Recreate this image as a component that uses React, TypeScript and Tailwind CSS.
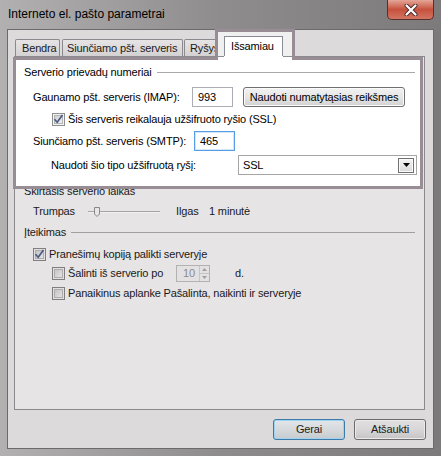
import type { ReactNode } from "react"

function Check({ checked, dim }: { checked?: boolean; dim?: boolean }) {
    return (
        <span
            className={
                dim
                    ? "flex h-[13px] w-[13px] shrink-0 items-center justify-center border border-[#807e80] bg-[#e2e0e1]"
                    : "flex h-[13px] w-[13px] shrink-0 items-center justify-center border border-[#8e8f8f] bg-[#f4f4f4]"
            }
        >
            <span
                className={
                    dim
                        ? "flex h-[9px] w-[9px] items-center justify-center border border-[#aeacad] bg-gradient-to-br from-[#c6c4c5] to-[#e4e2e3]"
                        : "flex h-[9px] w-[9px] items-center justify-center border border-[#b4b4b4] bg-gradient-to-br from-[#d2d2d2] to-[#f0f0f0]"
                }
            >
                {checked && (
                    <svg width="9" height="9" viewBox="0 0 9 9" className="overflow-visible">
                        <path d="M0.5 4.2 L3.2 7.2 L8.5 0" stroke="#4b5b85" strokeWidth="1.7" fill="none" />
                    </svg>
                )}
            </span>
        </span>
    )
}

function WinButton({ children, focused, dim }: { children: ReactNode; focused?: boolean; dim?: boolean }) {
    return (
        <div
            className={
                focused
                    ? "flex h-[21px] w-[72px] items-center justify-center rounded-[3px] border border-[#3b7aa9] bg-gradient-to-b from-[#e2e6e9] via-[#d6dadd] to-[#c6cbcf] shadow-[inset_0_0_0_1px_#9fd3f0]"
                    : dim
                      ? "flex h-[21px] w-[72px] items-center justify-center rounded-[3px] border border-[#6c6a6b] bg-gradient-to-b from-[#e2e0e1] via-[#d8d6d7] to-[#c6c4c5] shadow-[inset_0_0_0_1px_#ecebeb]"
                      : "flex h-[20px] w-[162px] items-center justify-center rounded-[3px] border border-[#707070] bg-gradient-to-b from-[#f2f2f2] via-[#e6e6e6] to-[#d2d2d2] shadow-[inset_0_0_0_1px_#fbfbfb]"
            }
        >
            {children}
        </div>
    )
}

function Tab({ children, w, pl }: { children: ReactNode; w: string; pl: string }) {
    return (
        <div
            className={`flex h-[17px] items-center rounded-t-[2px] border border-b-0 border-[#8b898d] bg-gradient-to-b from-[#e6e4e5] to-[#d3d1d2] ${w} ${pl}`}
        >
            {children}
        </div>
    )
}

export default function App() {
    return (
        <div className="relative h-[456px] w-[441px] overflow-hidden bg-gradient-to-r from-[#b2b0b1] via-[#8e8c8d] to-[#7c7a7b] font-['Liberation_Sans',sans-serif] text-[11px] leading-[13px] tracking-[-0.15px] text-[#1a1a1a]">
            {/* title bar */}
            <div className="flex h-[29px] items-center pl-[8px]">
                <span className="text-[12px] tracking-normal text-black">Interneto el. pašto parametrai</span>
            </div>

            {/* close button */}
            <div className="absolute left-[387px] top-0 flex h-[20px] w-[47px] items-center justify-center rounded-b-[5px] border border-t-0 border-[#5a2e2a] bg-gradient-to-b from-[#e3a597] via-[#c6513d] to-[#d27563]">
                <svg width="14" height="12" viewBox="0 0 14 12">
                    <path d="M2.5 1.5 L11.5 10.5 M11.5 1.5 L2.5 10.5" stroke="#4a2a2a" strokeWidth="4" strokeLinecap="round" />
                    <path d="M2.5 1.5 L11.5 10.5 M11.5 1.5 L2.5 10.5" stroke="#ffffff" strokeWidth="2.2" strokeLinecap="round" />
                </svg>
            </div>

            {/* client area */}
            <div className="mx-[7px] flex h-[420px] flex-col border border-[#6c6a6b] bg-[#dcdadb]">
                {/* tabs */}
                <div className="flex h-[26px] items-end pl-[7px]">
                    <Tab w="w-[45px]" pl="pl-[6px]">Bendra</Tab>
                    <div className="w-[2px]" />
                    <Tab w="w-[121px]" pl="pl-[4px]">Siunčiamo pšt. serveris</Tab>
                    <div className="w-[1px]" />
                    <Tab w="w-[40px]" pl="pl-[5px]">Ryšys</Tab>
                </div>

                {/* tab panel */}
                <div className="ml-[6px] flex h-[354px] w-[411px] flex-col border border-[#8b898d] bg-[#e6e4e5]">
                    {/* highlighted group */}
                    <div className="relative z-10 -ml-[2px] flex h-[132px] w-[410px] flex-col border-[3px] border-[#998d95] bg-white text-black">
                        <div className="mt-[6px] flex h-[13px] items-center pl-[8px]">
                            <span>Serverio prievadų numeriai</span>
                            <div className="ml-[5px] mr-[5px] h-px flex-1 bg-[#a9a9a9]" />
                        </div>

                        <div className="mt-[8px] flex h-[20px] items-center pl-[17px]">
                            <span className="w-[159px]">Gaunamo pšt. serveris (IMAP):</span>
                            <div className="flex h-[20px] w-[41px] items-center border border-[#abadb3] pl-[5px]">993</div>
                            <div className="ml-[10px]">
                                <WinButton>Naudoti numatytąsias reikšmes</WinButton>
                            </div>
                        </div>

                        <div className="mt-[6px] flex h-[13px] items-center pl-[36px]">
                            <Check checked />
                            <span className="ml-[3px]">Šis serveris reikalauja užšifruoto ryšio (SSL)</span>
                        </div>

                        <div className="mt-[5px] flex h-[20px] items-center pl-[17px]">
                            <span className="w-[161px]">Siunčiamo pšt. serveris (SMTP):</span>
                            <div className="flex h-[20px] w-[41px] items-center border border-[#569de5] pl-[5px] shadow-[inset_0_0_0_1px_#d4e6f7]">465</div>
                        </div>

                        <div className="mt-[4px] flex h-[20px] items-center pl-[35px]">
                            <span className="w-[187px]">Naudoti šio tipo užšifruotą ryšį:</span>
                            <div className="flex h-[20px] w-[179px] items-center justify-between border border-[#a5a5a5] pl-[4px] pr-[2px]">
                                <span>SSL</span>
                                <div className="flex h-[15px] w-[16px] items-center justify-center border border-[#707070] bg-gradient-to-b from-[#f3f3f3] to-[#d9d9d9] shadow-[inset_0_0_0_1px_#fbfbfb]">
                                    <svg width="7" height="4" viewBox="0 0 7 4">
                                        <path d="M0 0 H7 L3.5 4 Z" fill="#000" />
                                    </svg>
                                </div>
                            </div>
                        </div>
                    </div>

                    {/* rest of the panel, dimmed */}
                    <div className="-mt-[4px] flex h-[13px] items-center pl-[9px]">Skirtasis serverio laikas</div>

                    <div className="mt-[7px] flex h-[13px] items-center pl-[18px]">
                        <span className="w-[55px]">Trumpas</span>
                        <svg width="72" height="12" viewBox="0 0 72 12">
                            <rect x="0" y="5" width="72" height="1" fill="#a6a4a5" />
                            <rect x="0" y="6" width="72" height="1" fill="#f1f0f0" />
                            <path d="M6.5 1.5 H11.5 V8 L9 10.5 L6.5 8 Z" fill="#e8e6e7" stroke="#8a8889" />
                        </svg>
                        <span className="ml-[16px] w-[33px]">Ilgas</span>
                        <span>1 minutė</span>
                    </div>

                    <div className="mt-[8px] flex h-[13px] items-center pl-[9px]">
                        <span>Įteikimas</span>
                        <div className="ml-[5px] mr-[9px] h-px flex-1 bg-[#a19fa0]" />
                    </div>

                    <div className="mt-[9px] flex h-[13px] items-center pl-[18px]">
                        <Check checked dim />
                        <span className="ml-[3px]">Pranešimų kopiją palikti serveryje</span>
                    </div>

                    <div className="mt-[4px] flex h-[17px] items-center pl-[37px]">
                        <Check dim />
                        <span className="ml-[3px] w-[108px]">Šalinti iš serverio po</span>
                        <div className="flex h-[17px] w-[34px] items-center border border-[#b3b1b2] bg-[#e3e1e2]">
                            <span className="ml-[6px] flex-1 text-[#8d8b8c]">10</span>
                            <div className="flex h-full w-[10px] flex-col border-l border-[#c6c4c5]">
                                <div className="flex flex-1 items-center justify-center border-b border-[#c6c4c5]">
                                    <svg width="5" height="3" viewBox="0 0 5 3">
                                        <path d="M0 3 L2.5 0 L5 3 Z" fill="#a09ea0" />
                                    </svg>
                                </div>
                                <div className="flex flex-1 items-center justify-center">
                                    <svg width="5" height="3" viewBox="0 0 5 3">
                                        <path d="M0 0 H5 L2.5 3 Z" fill="#a09ea0" />
                                    </svg>
                                </div>
                            </div>
                        </div>
                        <span className="ml-[25px]">d.</span>
                    </div>

                    <div className="mt-[5px] flex h-[13px] items-center pl-[37px]">
                        <Check dim />
                        <span className="ml-[3px]">Panaikinus aplanke Pašalinta, naikinti ir serveryje</span>
                    </div>
                </div>

                {/* dialog buttons */}
                <div className="mt-[9px] flex justify-end gap-[9px] pr-[7px]">
                    <WinButton focused>Gerai</WinButton>
                    <WinButton dim>Atšaukti</WinButton>
                </div>
            </div>

            {/* highlight over the selected tab */}
            <div className="absolute left-[215px] top-[29px] z-20 flex h-[31px] w-[80px] flex-col border-[3px] border-b-0 border-[#998d95] bg-[#f0f0f0] text-black">
                <div className="flex h-[24px] items-end pl-[6px]">
                    <div className="flex h-[20px] w-[59px] items-center border border-b-0 border-[#898c95] bg-white pl-[6px]">Išsamiau</div>
                </div>
                <div className="flex h-px">
                    <div className="w-[6px] bg-[#898c95]" />
                    <div className="w-[59px] bg-white" />
                    <div className="flex-1 bg-[#898c95]" />
                </div>
                <div className="h-[3px] bg-white" />
            </div>
        </div>
    )
}
